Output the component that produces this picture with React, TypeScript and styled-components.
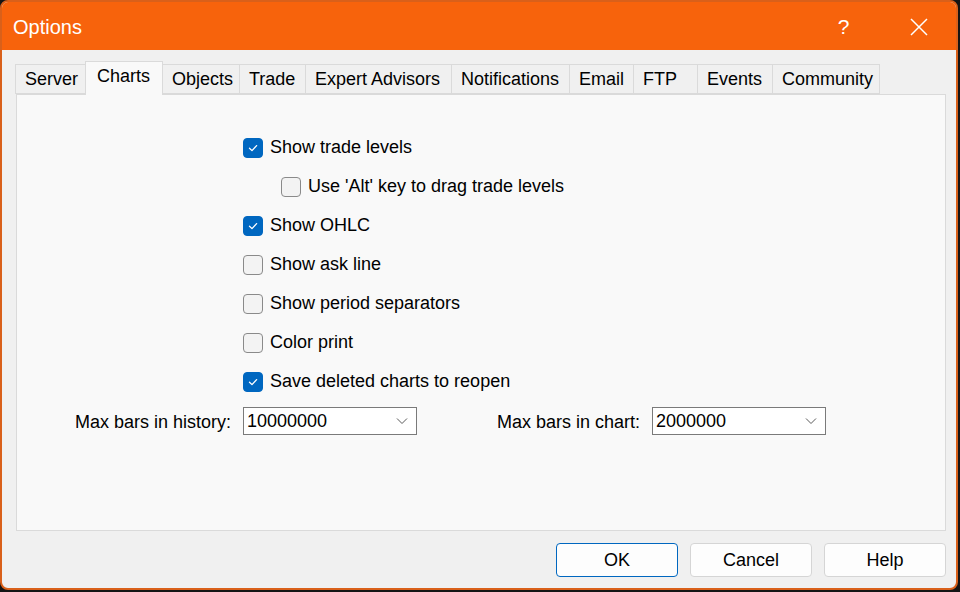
import React from "react";
import styled, { createGlobalStyle } from "styled-components";

const GlobalStyle = createGlobalStyle`
  html, body { margin: 0; padding: 0; background: #141414; }
  body { font-family: "Liberation Sans", Arial, sans-serif; }
  * { box-sizing: border-box; }
`;

const Window = styled.div`
  width: 958px;
  height: 590px;
  border: 2px solid #d9601a;
  border-radius: 8px;
  overflow: hidden;
  background: #f0f0f0;
  display: flex;
  flex-direction: column;
`;

const TitleBar = styled.div`
  height: 48px;
  background: #f7630c;
  display: flex;
  align-items: center;
  padding-left: 11px;
  padding-top: 2px;
  color: #ffffff;
  font-size: 20px;
`;

const Title = styled.div`
  flex: 1;
`;

const TitleButton = styled.div<{ $w: number }>`
  width: ${(p) => p.$w}px;
  height: 46px;
  display: flex;
  align-items: center;
  justify-content: center;
  color: #ffffff;
  font-size: 21px;
`;

const Body = styled.div`
  flex: 1;
  display: flex;
  flex-direction: column;
  padding: 11px 10px 0 14px;
`;

const TabRow = styled.div`
  display: flex;
  align-items: flex-end;
  height: 33px;
  position: relative;
  z-index: 1;
`;

const Tab = styled.div<{ $w: number; $active?: boolean }>`
  width: ${(p) => p.$w}px;
  height: ${(p) => (p.$active ? 34 : 30)}px;
  margin-bottom: ${(p) => (p.$active ? -1 : 0)}px;
  background: ${(p) => (p.$active ? "#f9f9f9" : "#f0f0f0")};
  border: 1px solid #dadada;
  border-bottom: ${(p) => (p.$active ? "none" : "1px solid #dadada")};
  margin-left: -1px;
  display: flex;
  justify-content: flex-start;
  align-items: ${(p) => (p.$active ? "flex-start" : "center")};
  padding-top: ${(p) => (p.$active ? 4 : 1)}px;
  padding-left: ${(p) => (p.$active ? 11 : 9)}px;
  font-size: 18px;
  color: #000;
  white-space: nowrap;
`;

const Panel = styled.div`
  width: 930px;
  height: 437px;
  background: #f9f9f9;
  border: 1px solid #dadada;
  padding: 33px 0 0 226px;
  display: flex;
  flex-direction: column;
`;

const CheckRow = styled.div<{ $indent?: boolean }>`
  height: 39px;
  display: flex;
  align-items: center;
  gap: 7px;
  padding-left: ${(p) => (p.$indent ? 38 : 0)}px;
  font-size: 18px;
  color: #000;
`;

const Box = styled.div<{ $checked?: boolean }>`
  width: 20px;
  height: 20px;
  border-radius: 4px;
  background: ${(p) => (p.$checked ? "#0067c0" : "#f3f3f3")};
  border: 1px solid ${(p) => (p.$checked ? "#0067c0" : "#8a8a8a")};
  display: flex;
  align-items: center;
  justify-content: center;
`;

const FieldRow = styled.div`
  display: flex;
  align-items: center;
  margin-top: 6px;
  margin-left: -226px;
  font-size: 18px;
  color: #000;
`;

const FieldLabel = styled.div<{ $w: number }>`
  width: ${(p) => p.$w}px;
  text-align: right;
  padding-right: 12px;
  padding-top: 2px;
  white-space: nowrap;
`;

const Combo = styled.div`
  width: 174px;
  height: 28px;
  background: #ffffff;
  border: 1px solid #7a7a7a;
  display: flex;
  align-items: center;
  justify-content: space-between;
  padding: 0 8px 0 3px;
  font-size: 18px;
  color: #000;
`;

const ButtonRow = styled.div`
  display: flex;
  justify-content: flex-end;
  gap: 12px;
  padding-top: 12px;
`;

const Button = styled.div<{ $default?: boolean }>`
  width: 122px;
  height: 34px;
  border-radius: 4px;
  background: #fdfdfd;
  border: 1px solid ${(p) => (p.$default ? "#0067c0" : "#d5d5d5")};
  display: flex;
  align-items: center;
  justify-content: center;
  font-size: 18px;
  color: #000;
`;

const Check = () => (
  <svg width="12" height="12" viewBox="0 0 12 12">
    <path d="M2.5 6.2 L5 8.6 L9.6 3.6" fill="none" stroke="#ffffff" strokeWidth="1.3" strokeLinecap="round" strokeLinejoin="round" />
  </svg>
);

const Chevron = () => (
  <svg width="12" height="8" viewBox="0 0 12 8">
    <path d="M1 1.5 L6 6.5 L11 1.5" fill="none" stroke="#5a5a5a" strokeWidth="1" />
  </svg>
);

const CloseIcon = () => (
  <svg width="18" height="18" viewBox="0 0 18 18">
    <path d="M1 1 L17 17 M17 1 L1 17" stroke="#ffffff" strokeWidth="1.5" />
  </svg>
);

const tabs: [string, number][] = [
  ["Server", 71],
  ["Charts", 78],
  ["Objects", 78],
  ["Trade", 67],
  ["Expert Advisors", 147],
  ["Notifications", 119],
  ["Email", 65],
  ["FTP", 65],
  ["Events", 76],
  ["Community", 108],
];

const checks: { label: string; checked?: boolean; indent?: boolean }[] = [
  { label: "Show trade levels", checked: true },
  { label: "Use 'Alt' key to drag trade levels", indent: true },
  { label: "Show OHLC", checked: true },
  { label: "Show ask line" },
  { label: "Show period separators" },
  { label: "Color print" },
  { label: "Save deleted charts to reopen", checked: true },
];

export default function App() {
  return (
    <>
      <GlobalStyle />
      <Window>
        <TitleBar>
          <Title>Options</Title>
          <TitleButton $w={75}>?</TitleButton>
          <TitleButton $w={75}>
            <CloseIcon />
          </TitleButton>
        </TitleBar>
        <Body>
          <TabRow>
            {tabs.map(([t, w]) => (
              <Tab key={t} $w={w} $active={t === "Charts"}>
                {t}
              </Tab>
            ))}
          </TabRow>
          <Panel>
            {checks.map((c) => (
              <CheckRow key={c.label} $indent={c.indent}>
                <Box $checked={c.checked}>{c.checked && <Check />}</Box>
                {c.label}
              </CheckRow>
            ))}
            <FieldRow>
              <FieldLabel $w={226}>Max bars in history:</FieldLabel>
              <Combo>
                10000000
                <Chevron />
              </Combo>
              <FieldLabel $w={235}>Max bars in chart:</FieldLabel>
              <Combo>
                2000000
                <Chevron />
              </Combo>
            </FieldRow>
          </Panel>
          <ButtonRow>
            <Button $default>OK</Button>
            <Button>Cancel</Button>
            <Button>Help</Button>
          </ButtonRow>
        </Body>
      </Window>
    </>
  );
}
